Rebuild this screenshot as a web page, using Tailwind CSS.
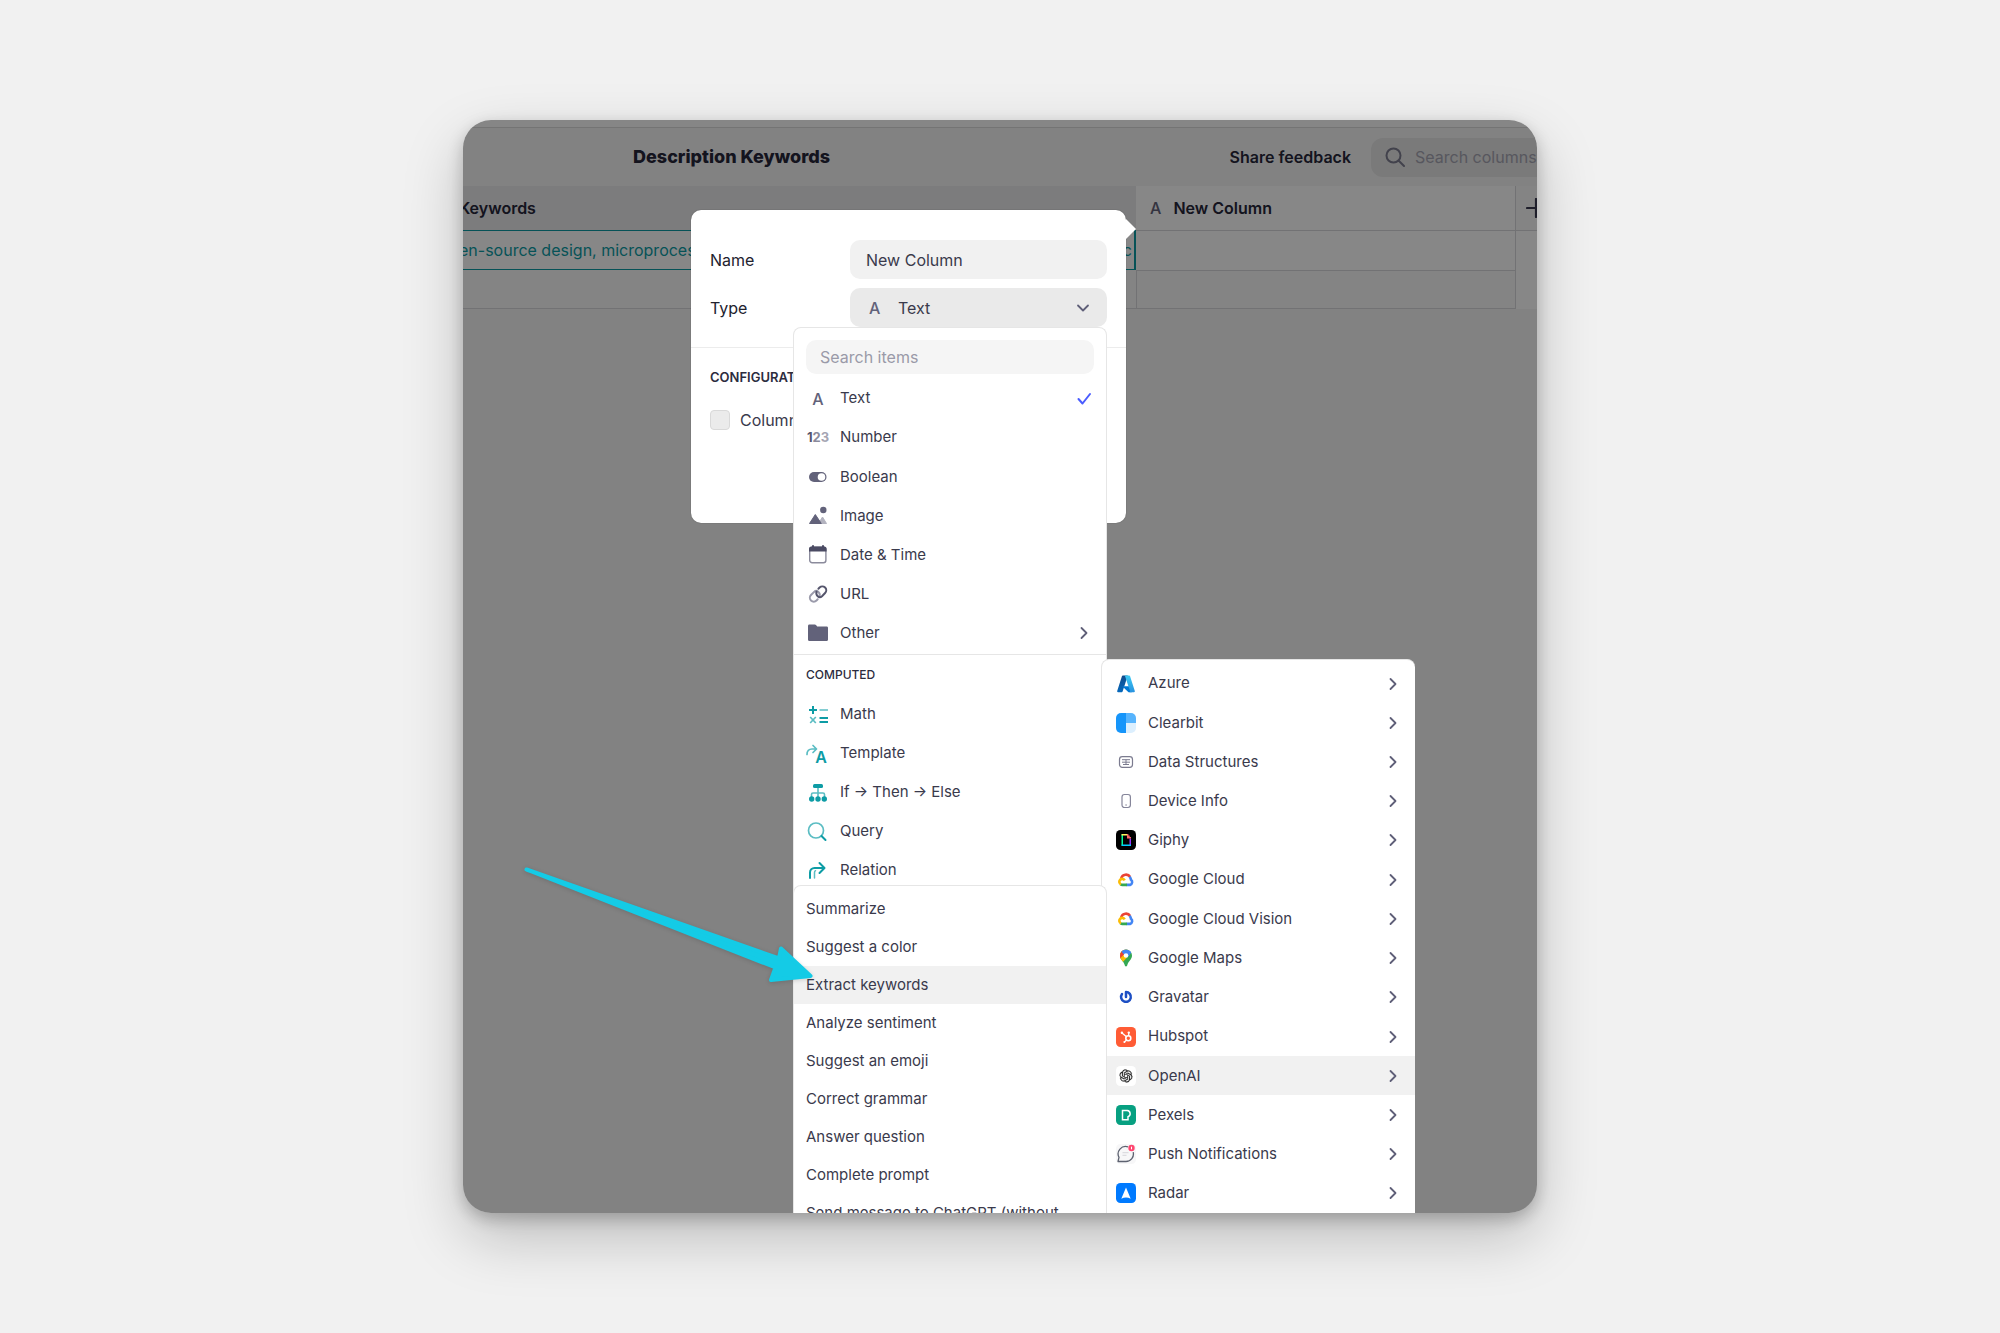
<!DOCTYPE html>
<html lang="en">
<head>
    <meta charset="UTF-8">
    <meta name="viewport" content="width=device-width, initial-scale=1.0">
    <title>Description Keywords</title>
    <script src="https://cdn.jsdelivr.net/npm/@tailwindcss/browser@4"></script>
</head>
<body class="bg-[#f1f1f1] font-['Inter',sans-serif] text-[#3a3a4c]">

<!-- Shared icons -->
<svg class="hidden" aria-hidden="true">
    <symbol id="chevron" viewBox="0 0 16 16">
        <path d="M5.5 3l5 5-5 5" fill="none" stroke="#5f5f78" stroke-width="1.8" stroke-linecap="round" stroke-linejoin="round"/>
    </symbol>
    <symbol id="google-cloud" viewBox="0 0 20 20">
        <path d="M5.2 8.2A5 5 0 0 1 14.2 7" fill="none" stroke="#ea4335" stroke-width="2.6"/>
        <path d="M13.6 6.8A5 5 0 0 1 15 9.8a2.9 2.9 0 0 1-.9 5.1H10.5" fill="none" stroke="#4285f4" stroke-width="2.6"/>
        <path d="M11 14.9H6.5a3 3 0 0 1-2-.7" fill="none" stroke="#34a853" stroke-width="2.6"/>
        <path d="M5 14.4a2.9 2.9 0 1 1 3.7-4.1" fill="none" stroke="#fbbc05" stroke-width="2.6"/>
    </symbol>
</svg>

<main class="min-h-screen flex justify-center py-[120px] px-6">
    <div class="relative w-full max-w-[1074px] overflow-hidden rounded-[28px] bg-[#f6f6f6] shadow-[0_24px_60px_rgba(0,0,0,0.22),0_6px_16px_rgba(0,0,0,0.22)]">

        <!-- Toolbar -->
        <div class="h-[7px] bg-[#fdfdfd]"></div>
        <header class="flex items-center h-[59px] pl-[170px] border-t border-[#dcdcdc] bg-[#f6f6f6]">
            <h1 class="text-lg font-extrabold text-[#26263a]">Description Keywords</h1>
            <button type="button" class="ml-auto mr-5 text-base font-semibold text-[#26263a]">Share feedback</button>
            <label class="flex items-center gap-2.5 shrink-0 w-[190px] h-[39px] -mr-6 pl-[14px] rounded-xl bg-[#e6e6e6]">
                <svg class="size-5 shrink-0" viewBox="0 0 20 20" fill="none" stroke="#7d7d90" stroke-width="2" stroke-linecap="round">
                    <circle cx="8.5" cy="8.5" r="7"/>
                    <path d="M13.5 13.5l5.5 5.5"/>
                </svg>
                <input type="text" aria-label="Search columns" placeholder="Search columns" class="w-full bg-transparent text-base placeholder-[#a5a5b2] focus:outline-none">
            </label>
        </header>

        <!-- Data grid -->
        <table class="w-full table-fixed border-collapse bg-white text-left text-base">
            <colgroup>
                <col class="w-[673px]">
                <col class="w-[379px]">
                <col>
            </colgroup>
            <thead>
                <tr class="h-[44px]">
                    <th class="bg-[#eaeaed] font-semibold text-[#26263a]"><span class="-ml-1">Keywords</span></th>
                    <th class="border-b border-r border-[#d8d8dc] pl-[14px] font-semibold text-[#26263a]">
                        <span class="mr-2 font-medium text-[#62627a]">A</span>
                        New Column
                    </th>
                    <th rowspan="3" class="align-top bg-[#fafafa] border-b border-[#d8d8dc]">
                        <button type="button" aria-label="Add column" class="block ml-2.5 mt-3 w-5">
                            <svg class="size-5" viewBox="0 0 20 20" stroke="#3a3a50" stroke-width="2.2" stroke-linecap="round">
                                <path d="M1 10h18M10 1v18"/>
                            </svg>
                        </button>
                    </th>
                </tr>
            </thead>
            <tbody>
                <tr class="h-[40px]">
                    <td class="p-0 text-[#0d9ca5]">
                        <div class="flex justify-between h-[40px] items-center border-y border-r-2 border-[#0d9ca5] pr-0.5 whitespace-nowrap">
                            <span class="-ml-1">en-source design, microproces</span>
                            <span>c</span>
                        </div>
                    </td>
                    <td class="border-b border-r border-[#d8d8dc]"></td>
                </tr>
                <tr class="h-[38px]">
                    <td class="bg-[#fafafa] border-b border-r border-[#d8d8dc]"></td>
                    <td class="bg-[#fafafa] border-b border-r border-[#d8d8dc]"></td>
                </tr>
            </tbody>
        </table>

        <!-- Backdrop -->
        <div class="absolute inset-0 bg-black/47"></div>

        <!-- Column popover -->
        <form class="absolute left-[228px] top-[90px] w-[435px] h-[313px] rounded-[10px] bg-white shadow-[0_0_1px_rgba(0,0,0,0.5)]">
            <svg class="absolute left-full top-[9px] w-[10px] h-5" viewBox="0 0 10 20" fill="#fff"><path d="M0 0l10 10L0 20z"/></svg>
            <div class="flex flex-col gap-[9px] px-[19px] pt-[30px] pb-5 border-b border-[#ececec] text-base text-[#22222e]">
                <div class="flex items-center justify-between">
                    <label for="columnName">Name</label>
                    <input type="text" id="columnName" value="New Column" class="w-[257px] h-[39px] px-4 rounded-[10px] bg-[#f1f1f1] text-[#3a3a4c] focus:outline-none">
                </div>
                <div class="flex items-center justify-between">
                    <label for="columnType">Type</label>
                    <div class="relative w-[257px]">
                        <span class="absolute left-[19px] top-2 font-medium text-[#62627a]">A</span>
                        <select id="columnType" class="appearance-none block w-full h-[39px] pl-12 rounded-[10px] bg-[#eaeaea] text-[#3a3a4c] focus:outline-none">
                            <option>Text</option>
                        </select>
                        <svg class="absolute right-4 top-3 size-4 rotate-90"><use href="#chevron"/></svg>
                    </div>
                </div>
            </div>
            <h2 class="px-[19px] pt-5 text-[13px] leading-[18px] font-semibold text-[#2c2c3e]">CONFIGURATION</h2>
            <div class="flex items-center gap-2.5 px-[19px] pt-6 text-base leading-5">
                <input type="checkbox" id="userSpecific" class="appearance-none size-5 rounded-[4px] border border-[#d9d9d9] bg-[#ebebeb]">
                <label for="userSpecific">Column is user specific</label>
            </div>
        </form>

        <!-- Type menu -->
        <div class="absolute left-[330px] top-[207px] bottom-0 w-[314px] pt-3 rounded-t-lg border border-b-0 border-[#e6e6e6] bg-white text-[15px]">
            <div class="px-3">
                <input type="text" aria-label="Search items" placeholder="Search items" class="w-full h-[34px] px-[14px] rounded-[10px] bg-[#f5f5f5] text-base placeholder-[#9a9aa8] focus:outline-none">
            </div>
            <ul class="flex flex-col h-[281px] pt-[5px] pb-px border-b border-[#e6e6e6]">
                <li class="flex-1 flex"><button type="button" class="flex items-center w-full px-3 text-left">
                    <span class="w-6 mr-2.5 text-center text-base font-medium text-[#62627a]">A</span>
                    Text
                    <svg class="ml-auto size-5" viewBox="0 0 20 20" fill="none" stroke="#4a5cff" stroke-width="2" stroke-linecap="round" stroke-linejoin="round"><path d="M4.5 10l4 4.5 7.5-9.5"/></svg>
                </button></li>
                <li class="flex-1 flex"><button type="button" class="flex items-center w-full px-3 text-left">
                    <span class="w-6 mr-2.5 text-center text-[13px] font-bold text-[#55556c]">1<span class="text-[#8b8b9c]">2</span><span class="text-[#a5a5b3]">3</span></span>
                    Number
                </button></li>
                <li class="flex-1 flex"><button type="button" class="flex items-center w-full px-3 text-left">
                    <svg class="w-6 h-5 mr-2.5" viewBox="0 0 24 20">
                        <rect x="3" y="5" width="17.5" height="10" rx="5" fill="#62627a"/>
                        <circle cx="15.5" cy="10" r="3.8" fill="#fff"/>
                    </svg>
                    Boolean
                </button></li>
                <li class="flex-1 flex"><button type="button" class="flex items-center w-full px-3 text-left">
                    <svg class="w-6 h-5 mr-2.5" viewBox="0 0 24 20">
                        <path d="M12.500 17.500l4-6.500 4 6.500z" fill="#b3b3bf" stroke="#b3b3bf" stroke-linejoin="round"/>
                        <path d="M3.500 17.500L9.300 8.500l6 9z" fill="#62627a" stroke="#62627a" stroke-linejoin="round"/>
                        <circle cx="17.300" cy="4" r="3.200" fill="#62627a"/>
                    </svg>
                    Image
                </button></li>
                <li class="flex-1 flex"><button type="button" class="flex items-center w-full px-3 text-left">
                    <svg class="w-6 h-5 mr-2.5" viewBox="0 0 24 20">
                        <rect x="3.700" y="2.200" width="16.200" height="15.600" rx="2.500" fill="#fff" stroke="#8b8b9c" stroke-width="1.400"/>
                        <path d="M3 6.500V4A2.500 2.500 0 0 1 5.500 1.500H6V.3h2v1.200h8V.3h2v1.200h.1A2.500 2.500 0 0 1 20.600 4v2.500z" fill="#4b4b63"/>
                    </svg>
                    Date &amp; Time
                </button></li>
                <li class="flex-1 flex"><button type="button" class="flex items-center w-full px-3 text-left">
                    <svg class="w-6 h-5 mr-2.5" viewBox="0 0 24 20" fill="none" stroke-width="2" stroke-linecap="round">
                        <path d="M13.5 12.5c.6-1.800.2-3.400-1.100-4.600-1.200-1.100-3-1.200-4.300 0L5 11a3.900 3.900 0 0 0 0 5.500c1.600 1.500 4 1.500 5.500 0l1.200-1.200" stroke="#9b9bab"/>
                        <path d="M10.600 7.600c-.6 1.800-.2 3.400 1.100 4.600 1.200 1.100 3 1.200 4.300 0L19.100 9a3.900 3.900 0 0 0 0-5.500c-1.600-1.500-4-1.500-5.500 0l-1.200 1.200" stroke="#55556c"/>
                    </svg>
                    URL
                </button></li>
                <li class="flex-1 flex"><button type="button" class="flex items-center w-full px-3 text-left">
                    <svg class="w-6 h-5 mr-2.5" viewBox="0 0 24 20">
                        <path d="M2 3c0-.9.500-1.500 1.400-1.500h5.400c.5 0 .9.200 1.200.6L11.200 3.500h9.400c.9 0 1.400.6 1.400 1.400v11.700c0 .9-.5 1.500-1.400 1.500H3.400c-.9 0-1.400-.6-1.400-1.500z" fill="#62627a"/>
                    </svg>
                    Other
                    <svg class="ml-auto mr-0.5 size-4"><use href="#chevron"/></svg>
                </button></li>
            </ul>
            <h3 class="px-3 text-xs leading-10 font-medium text-[#2c2c3e]">COMPUTED</h3>
            <ul>
                <li><button type="button" class="flex items-center w-full h-[39px] px-3 text-left">
                    <svg class="w-6 h-5 mr-2.5" viewBox="0 0 24 20" fill="none" stroke-width="2">
                        <path d="M3 5h8M7 1v8M13.500 13h8.500M13.500 17h8.500" stroke="#0d9ca5"/>
                        <path d="M13.500 5H22M4.200 12l5.600 6M9.800 12l-5.600 6" stroke="#5bbdc3" stroke-width="1.700"/>
                    </svg>
                    Math
                </button></li>
                <li><button type="button" class="flex items-center w-full h-[39px] px-3 text-left">
                    <span class="relative w-6 h-5 mr-2.5 pr-[3px] text-right text-base leading-[26px] font-semibold text-[#0d9ca5]">
                        <svg class="absolute left-0 top-0 size-3" viewBox="0 0 12 12" fill="none" stroke="#5bbdc3" stroke-width="1.700" stroke-linecap="round" stroke-linejoin="round"><path d="M1 10.500C1 7 3 5 6 5h4M7 1.500L10.500 5 7 8.500"/></svg>
                        A
                    </span>
                    Template
                </button></li>
                <li><button type="button" class="flex items-center w-full h-[39px] px-3 text-left">
                    <svg class="w-6 h-5 mr-2.5" viewBox="0 0 24 20">
                        <path d="M12 4v12M5.500 15v-3.500a1.500 1.500 0 0 1 1.500-1.500h10a1.500 1.500 0 0 1 1.500 1.500V15" fill="none" stroke="#5bbdc3" stroke-width="1.600"/>
                        <g fill="#0d9ca5"><rect x="7" y="1" width="10" height="4" rx="1.500"/><circle cx="5.700" cy="16" r="2.700"/><circle cx="12" cy="16" r="2.700"/><circle cx="18.300" cy="16" r="2.700"/></g>
                    </svg>
                    If → Then → Else
                </button></li>
                <li><button type="button" class="flex items-center w-full h-[39px] px-3 text-left">
                    <svg class="w-6 h-5 mr-2.5" viewBox="0 0 24 20" fill="none" stroke-linecap="round">
                        <circle cx="10" cy="8.500" r="7.500" stroke="#5bbdc3" stroke-width="1.700"/>
                        <path d="M15.500 14l4 4" stroke="#0d9ca5" stroke-width="2"/>
                    </svg>
                    Query
                </button></li>
                <li><button type="button" class="flex items-center w-full h-[39px] px-3 text-left">
                    <svg class="w-6 h-5 mr-2.5" viewBox="0 0 24 20" fill="none" stroke-width="2" stroke-linecap="round" stroke-linejoin="round">
                        <path d="M8.500 17v-5.500a2 2 0 0 1 1-1.800" stroke="#5bbdc3" stroke-width="1.500"/>
                        <path d="M4 17v-5.500A4.500 4.500 0 0 1 8.500 7H18M13.500 2L18.500 7l-5 5" stroke="#0d9ca5"/>
                    </svg>
                    Relation
                </button></li>
            </ul>
        </div>

        <!-- Integrations menu -->
        <ul class="absolute left-[638px] top-[539px] bottom-0 w-[314px] flex flex-col pt-1 rounded-t-lg border border-b-0 border-r-0 border-[#e6e6e6] bg-white text-[15px]">
            <li class="flex-1 flex"><button type="button" class="flex items-center w-full px-3.5 text-left">
                <svg class="size-5 mr-3" viewBox="0 0 20 20">
                    <defs>
                        <linearGradient id="azureDark" x1="0" y1="0" x2="0" y2="1"><stop offset="0" stop-color="#114a8b"/><stop offset="1" stop-color="#0669bc"/></linearGradient>
                        <linearGradient id="azureLight" x1="0" y1="0" x2="0" y2="1"><stop offset="0" stop-color="#3ccbf4"/><stop offset="1" stop-color="#2892df"/></linearGradient>
                    </defs>
                    <path d="M6.800 1.500h5L6.600 17.600a.9.9 0 0 1-.8.600H2a.9.9 0 0 1-.8-1.200L6 2.100a.9.9 0 0 1 .8-.6z" fill="url(#azureDark)"/>
                    <path d="M6.200 12.300h7.600l2 5.900h-3.300z" fill="#0078d4"/>
                    <path d="M8.200 1.500h5a.9.9 0 0 1 .8.600L18.800 17a.9.9 0 0 1-.8 1.200h-4.700a.9.900 0 0 0 .7-1.200L9 2.100a.9.900 0 0 0-.8-.6z" fill="url(#azureLight)"/>
                </svg>
                Azure
                <svg class="ml-auto size-4"><use href="#chevron"/></svg>
            </button></li>
            <li class="flex-1 flex"><button type="button" class="flex items-center w-full px-3.5 text-left">
                <svg class="size-5 mr-3" viewBox="0 0 20 20">
                    <path d="M10 0v20H5a5 5 0 0 1-5-5V5a5 5 0 0 1 5-5z" fill="#1695fa"/>
                    <path d="M10 0h5a5 5 0 0 1 5 5v5H10z" fill="#57b4fd"/>
                    <path d="M10 10h10v5a5 5 0 0 1-5 5h-5z" fill="#dceffe"/>
                </svg>
                Clearbit
                <svg class="ml-auto size-4"><use href="#chevron"/></svg>
            </button></li>
            <li class="flex-1 flex"><button type="button" class="flex items-center w-full px-3.5 text-left">
                <svg class="size-5 mr-3" viewBox="0 0 20 20" fill="none" stroke="#7b7b8f">
                    <rect x="3.500" y="4.700" width="13" height="10.600" rx="2.800" stroke-width="1.200"/>
                    <path d="M6 7.700h8M6 10.200h8M7 12.500h6M10 7.700v4.800" stroke-width="1"/>
                </svg>
                Data Structures
                <svg class="ml-auto size-4"><use href="#chevron"/></svg>
            </button></li>
            <li class="flex-1 flex"><button type="button" class="flex items-center w-full px-3.5 text-left">
                <svg class="size-5 mr-3" viewBox="0 0 20 20" fill="none" stroke="#85859a" stroke-width="1.200">
                    <rect x="6" y="3.500" width="8.400" height="13" rx="2.400"/>
                    <path d="M9.300 14h1.600"/>
                </svg>
                Device Info
                <svg class="ml-auto size-4"><use href="#chevron"/></svg>
            </button></li>
            <li class="flex-1 flex"><button type="button" class="flex items-center w-full px-3.5 text-left">
                <svg class="size-5 mr-3" viewBox="0 0 20 20">
                    <rect width="20" height="20" rx="4.500" fill="#000"/>
                    <path d="M5.500 4.500h1.500v11H5.500z" fill="#00ff99"/>
                    <path d="M13.500 8.500H15v7h-1.500z" fill="#9933ff"/>
                    <path d="M5.500 14.500H15V16H5.500z" fill="#00ccff"/>
                    <path d="M5.500 4h5.500v1.500H5.500z" fill="#fff35c"/>
                    <path d="M11 4v4.500h4V7h-1.300V5.500h-1.300V4z" fill="#ff6666"/>
                </svg>
                Giphy
                <svg class="ml-auto size-4"><use href="#chevron"/></svg>
            </button></li>
            <li class="flex-1 flex"><button type="button" class="flex items-center w-full px-3.5 text-left">
                <svg class="size-5 mr-3"><use href="#google-cloud"/></svg>
                Google Cloud
                <svg class="ml-auto size-4"><use href="#chevron"/></svg>
            </button></li>
            <li class="flex-1 flex"><button type="button" class="flex items-center w-full px-3.5 text-left">
                <svg class="size-5 mr-3"><use href="#google-cloud"/></svg>
                Google Cloud Vision
                <svg class="ml-auto size-4"><use href="#chevron"/></svg>
            </button></li>
            <li class="flex-1 flex"><button type="button" class="flex items-center w-full px-3.5 text-left">
                <svg class="size-5 mr-3" viewBox="0 0 20 20">
                    <clipPath id="pin"><path d="M10 1.500a6 6 0 0 1 6 6c0 4-3.500 5.500-4.600 9.300-.3 1-.6 1.700-1.400 1.700s-1.100-.7-1.400-1.700C7.500 13 4 11.500 4 7.500a6 6 0 0 1 6-6z"/></clipPath>
                    <g clip-path="url(#pin)">
                        <path d="M0 0h20v20H0z" fill="#34a853"/>
                        <path d="M4 12.500L14.500 1 0 0v12z" fill="#fbbc04"/>
                        <path d="M3 12l7-4.500-3-7H0v8z" fill="#ea4335"/>
                        <path d="M5.300 3.500L8.500 7 12 9l4-5.500V0H7z" fill="#4285f4"/>
                        <path d="M3 11.500l5-5 3 3-5.500 6z" fill="#fbbc04"/>
                    </g>
                    <circle cx="10" cy="7.500" r="2.300" fill="#fff"/>
                </svg>
                Google Maps
                <svg class="ml-auto size-4"><use href="#chevron"/></svg>
            </button></li>
            <li class="flex-1 flex"><button type="button" class="flex items-center w-full px-3.5 text-left">
                <svg class="size-5 mr-3" viewBox="0 0 20 20" fill="none" stroke="#1d4fc4" stroke-width="2.500" stroke-linecap="round">
                    <path d="M10 5v5M10 5a4.900 4.900 0 1 1-4 2"/>
                </svg>
                Gravatar
                <svg class="ml-auto size-4"><use href="#chevron"/></svg>
            </button></li>
            <li class="flex-1 flex"><button type="button" class="flex items-center w-full px-3.5 text-left">
                <svg class="size-5 mr-3" viewBox="0 0 20 20">
                    <rect width="20" height="20" rx="4.500" fill="#ff5c35"/>
                    <g fill="none" stroke="#fff" stroke-width="1.300" stroke-linecap="round">
                        <circle cx="12.300" cy="11.200" r="2.500" stroke-width="1.600"/>
                        <path d="M12.700 8.500V6M10.200 9.500L6 6M10.500 13l-2 2"/>
                    </g>
                    <g fill="#fff"><circle cx="12.800" cy="5.600" r="1.200"/><circle cx="5.900" cy="5.700" r="1.200"/><circle cx="8.400" cy="15" r="1"/></g>
                </svg>
                Hubspot
                <svg class="ml-auto size-4"><use href="#chevron"/></svg>
            </button></li>
            <li class="flex-1 flex"><button type="button" class="flex items-center w-full px-3.5 text-left bg-[#f1f1f1]">
                <svg class="size-5 mr-3" viewBox="0 0 20 20">
                    <rect width="20" height="20" rx="4.500" fill="#fff"/>
                    <path transform="translate(3.500 3.500) scale(.54)" fill="#222" stroke="#222" stroke-width=".4" d="M22.2819 9.8211a5.9847 5.9847 0 0 0-.5157-4.9108 6.0462 6.0462 0 0 0-6.5098-2.9A6.0651 6.0651 0 0 0 4.9807 4.1818a5.9847 5.9847 0 0 0-3.9977 2.9 6.0462 6.0462 0 0 0 .7427 7.0966 5.98 5.98 0 0 0 .511 4.9107 6.051 6.051 0 0 0 6.5146 2.9001A5.9847 5.9847 0 0 0 13.2599 24a6.0557 6.0557 0 0 0 5.7718-4.2058 5.9894 5.9894 0 0 0 3.9977-2.9001 6.0557 6.0557 0 0 0-.7475-7.0729zm-9.022 12.6081a4.4755 4.4755 0 0 1-2.8764-1.0408l.1419-.0804 4.7783-2.7582a.7948.7948 0 0 0 .3927-.6813v-6.7369l2.02 1.1686a.071.071 0 0 1 .038.052v5.5826a4.504 4.504 0 0 1-4.4945 4.4944zm-9.6607-4.1254a4.4708 4.4708 0 0 1-.5346-3.0137l.142.0852 4.783 2.7582a.7712.7712 0 0 0 .7806 0l5.8428-3.3685v2.3324a.0804.0804 0 0 1-.0332.0615L9.74 19.9502a4.4992 4.4992 0 0 1-6.1408-1.6464zM2.3408 7.8956a4.485 4.485 0 0 1 2.3655-1.9728V11.6a.7664.7664 0 0 0 .3879.6765l5.8144 3.3543-2.0201 1.1685a.0757.0757 0 0 1-.071 0l-4.8303-2.7865A4.504 4.504 0 0 1 2.3408 7.872zm16.5963 3.8558L13.1038 8.364 15.1192 7.2a.0757.0757 0 0 1 .071 0l4.8303 2.7913a4.4944 4.4944 0 0 1-.6765 8.1042v-5.6772a.79.79 0 0 0-.407-.667zm2.0107-3.0231l-.142-.0852-4.7735-2.7818a.7759.7759 0 0 0-.7854 0L9.409 9.2297V6.8974a.0662.0662 0 0 1 .0284-.0615l4.8303-2.7866a4.4992 4.4992 0 0 1 6.6802 4.66zM8.3065 12.863l-2.02-1.1638a.0804.0804 0 0 1-.038-.0567V6.0742a4.4992 4.4992 0 0 1 7.3757-3.4537l-.142.0805L8.704 5.459a.7948.7948 0 0 0-.3927.6813zm1.0976-2.3654l2.602-1.4998 2.6069 1.4998v2.9994l-2.5974 1.4997-2.6067-1.4997Z"/>
                </svg>
                OpenAI
                <svg class="ml-auto size-4"><use href="#chevron"/></svg>
            </button></li>
            <li class="flex-1 flex"><button type="button" class="flex items-center w-full px-3.5 text-left">
                <svg class="size-5 mr-3" viewBox="0 0 20 20">
                    <rect width="20" height="20" rx="4.500" fill="#07a081"/>
                    <path d="M6.500 5.500h4.800a3.200 3.200 0 0 1 .7 6.200v3H6.500z" fill="none" stroke="#fff" stroke-width="1.500"/>
                </svg>
                Pexels
                <svg class="ml-auto size-4"><use href="#chevron"/></svg>
            </button></li>
            <li class="flex-1 flex"><button type="button" class="flex items-center w-full px-3.5 text-left">
                <svg class="size-5 mr-3" viewBox="0 0 20 20" fill="none">
                    <rect width="20" height="20" rx="4.500" fill="#f7f7f8"/>
                    <path d="M12 2.800a7.500 7.500 0 0 0-9 10.600L2 17.500h8a7.500 7.500 0 0 0 7.200-9.300" stroke="#5d6270" stroke-width="1.300" stroke-linejoin="round"/>
                    <path d="M6.500 8.700h6M6.500 11.300h4" stroke="#d5d5da"/>
                    <circle cx="15.500" cy="4" r="3.200" fill="#ff4770"/>
                    <path d="M15.500 2.700v2.600" stroke="#fff"/>
                </svg>
                Push Notifications
                <svg class="ml-auto size-4"><use href="#chevron"/></svg>
            </button></li>
            <li class="flex-1 flex"><button type="button" class="flex items-center w-full px-3.5 text-left">
                <svg class="size-5 mr-3" viewBox="0 0 20 20">
                    <rect width="20" height="20" rx="4.500" fill="#007aff"/>
                    <path d="M10 4.500l4.700 11.200c-2.800-1.600-6.600-1.600-9.400 0z" fill="#fff"/>
                </svg>
                Radar
                <svg class="ml-auto size-4"><use href="#chevron"/></svg>
            </button></li>
        </ul>

        <!-- OpenAI actions menu -->
        <ul class="absolute left-[330px] top-[765px] bottom-0 w-[314px] pt-1 overflow-hidden rounded-t-lg border border-b-0 border-[#e6e6e6] bg-white text-[15px]">
            <li><button type="button" class="block w-full h-[38px] px-3 text-left">Summarize</button></li>
            <li><button type="button" class="block w-full h-[38px] px-3 text-left">Suggest a color</button></li>
            <li><button type="button" class="block w-full h-[38px] px-3 text-left bg-[#f1f1f1]">Extract keywords</button></li>
            <li><button type="button" class="block w-full h-[38px] px-3 text-left">Analyze sentiment</button></li>
            <li><button type="button" class="block w-full h-[38px] px-3 text-left">Suggest an emoji</button></li>
            <li><button type="button" class="block w-full h-[38px] px-3 text-left">Correct grammar</button></li>
            <li><button type="button" class="block w-full h-[38px] px-3 text-left">Answer question</button></li>
            <li><button type="button" class="block w-full h-[38px] px-3 text-left">Complete prompt</button></li>
            <li><button type="button" class="block w-full h-[38px] px-3 text-left whitespace-nowrap">Send message to ChatGPT (without</button></li>
        </ul>

        <!-- Pointer arrow -->
        <svg class="absolute left-[55px] top-[740px] w-[302px] h-[130px] drop-shadow-sm" viewBox="0 0 302 130">
            <path d="M8.500 9.500L261 98.500l2-10 29.500 27.500L253 120l4.500-12.500z" fill="#14cbe6" stroke="#14cbe6" stroke-width="4" stroke-linejoin="round"/>
        </svg>
    </div>
</main>
</body>
</html>
